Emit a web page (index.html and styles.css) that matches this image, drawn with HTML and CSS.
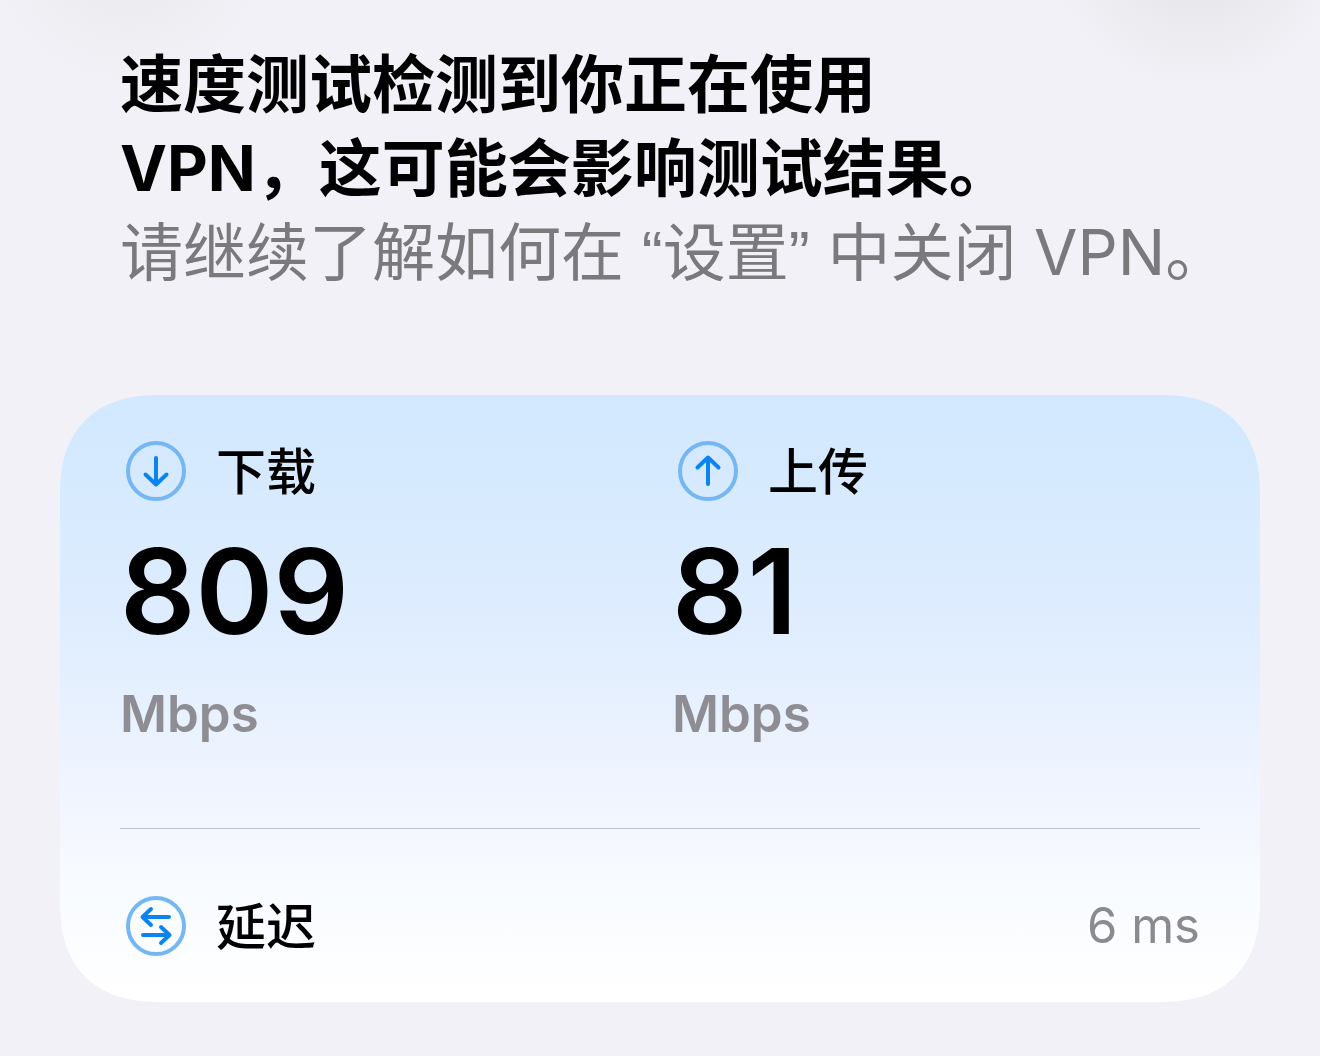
FILE: index.html
```
<!DOCTYPE html>
<html lang="zh-CN">
<head>
    <meta charset="UTF-8">
    <meta name="viewport" content="width=device-width, initial-scale=1.0">
    <title>速度测试</title>
    <link rel="stylesheet" href="styles.css">
</head>
<body>
    <main class="container">
        <header class="notice">
            <h1>速度测试检测到你正在使用<br>VPN，这可能会影响测试结果。</h1>
            <p>请继续了解如何在 <span class="quoted">“设置”</span> 中关闭 VPN。</p>
        </header>

        <section class="card">
            <div class="speeds">
                <div class="speed">
                    <h2 class="label">
                        <svg class="icon" viewBox="0 0 60 60" aria-hidden="true">
                            <circle cx="30" cy="30" r="28"/>
                            <path d="M30 17v26M19.500 33.500l10.500 10 10.500-10"/>
                        </svg>
                        下载
                    </h2>
                    <div class="value">809</div>
                    <div class="unit">Mbps</div>
                </div>
                <div class="speed">
                    <h2 class="label">
                        <svg class="icon" viewBox="0 0 60 60" aria-hidden="true">
                            <circle cx="30" cy="30" r="28"/>
                            <path d="M30 43V17M19.500 26.500l10.500-10 10.500 10"/>
                        </svg>
                        上传
                    </h2>
                    <div class="value">81</div>
                    <div class="unit">Mbps</div>
                </div>
            </div>

            <div class="latency">
                <h2 class="label">
                    <svg class="icon" viewBox="0 0 60 60" aria-hidden="true">
                        <circle cx="30" cy="30" r="28"/>
                        <path d="M43 21H17M25 13l-8.500 8 8.500 8M17 39h26M35 31l8.500 8-8.500 8"/>
                    </svg>
                    延迟
                </h2>
                <span class="ms">6 ms</span>
            </div>
        </section>
    </main>
</body>
</html>
```
FILE: styles.css
```
* {
    box-sizing: border-box;
}

body {
    margin: 0;
    font-family: Inter, "Noto Sans CJK SC", sans-serif;
    color: #000;
    background-color: #f2f1f7;
    background-image:
        radial-gradient(circle at 128px -60px, #ececf0 50px, rgba(242, 241, 247, 0) 150px),
        radial-gradient(circle at calc(100% - 124px) -60px, #e7e7eb 50px, rgba(242, 241, 247, 0) 150px);
    background-repeat: no-repeat;
}

.container {
    padding: 42px 60px 54px;
}

h1,
h2,
p {
    margin: 0;
}

.notice {
    padding: 0 0 0 60px;
    margin-bottom: 100px;
    font-size: 63px;
    line-height: 84px;
}

.notice h1 {
    font-size: 63px;
    font-weight: 700;
}

.notice p {
    color: #7a7a7d;
    white-space: nowrap;
}

/* curly quotes, Inter's are slanted */
.quoted {
    font-family: "Liberation Sans", "Noto Sans CJK SC", sans-serif;
}

.card {
    padding: 40px 60px;
    border-radius: 100px;
    corner-shape: superellipse(1.25);
    background: linear-gradient(#d1e8fe, #dfedfe 38%, #f1f5fe 66%, #f9fcff 84%, #fff);
}

.speeds {
    display: grid;
    grid-template-columns: 1fr 1fr;
    gap: 24px;
    padding-bottom: 76px;
    border-bottom: 1px solid #bcc1ce;
}

.label {
    display: flex;
    align-items: center;
    gap: 30px;
    padding-left: 6px;
    font-family: "Noto Sans", "Noto Sans CJK SC", sans-serif;
    font-size: 50px;
    font-weight: 500;
    line-height: 72px;
}

.icon {
    width: 60px;
    height: 60px;
    fill: none;
    stroke: #0a84f0;
    stroke-width: 4;
    stroke-linecap: round;
    stroke-linejoin: round;
}

.icon circle {
    stroke: #74b7f3;
}

.value {
    font-size: 118px;
    font-weight: 600;
    line-height: 168px;
}

.unit {
    font-size: 51px;
    font-weight: 600;
    line-height: 77px;
    color: #8e8d93;
}

.latency {
    display: flex;
    align-items: center;
    justify-content: space-between;
    padding-top: 61px;
}

.ms {
    font-size: 49px;
    line-height: 72px;
    color: #8b8b8f;
}
```
